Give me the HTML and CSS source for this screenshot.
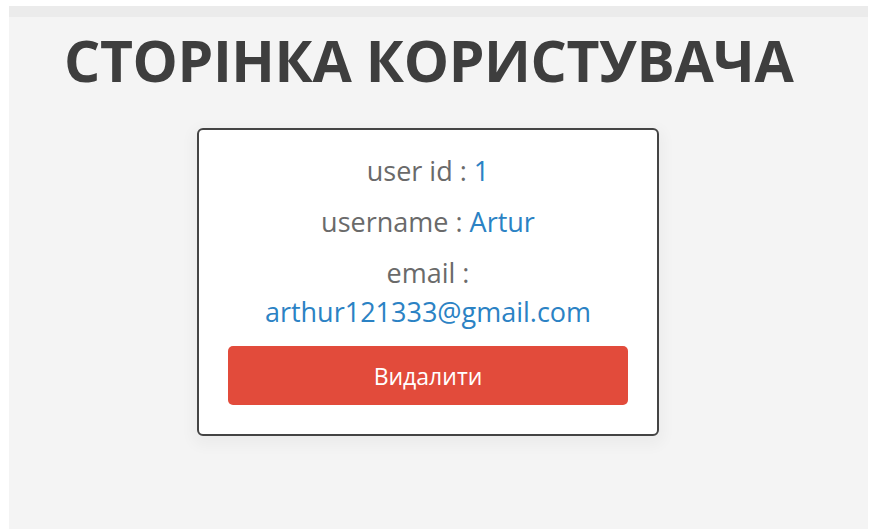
FILE: index.html
```html
<!DOCTYPE html>
<html lang="uk">
<head>
<meta charset="utf-8">
<title>Сторінка користувача</title>
<link rel="stylesheet" href="styles.css">
</head>
<body>
<div class="page">
  <div class="topbar"></div>
  <main class="content">
    <h1 class="title">СТОРІНКА КОРИСТУВАЧА</h1>
    <section class="card">
      <p class="field"><span class="label">user id :</span> <span class="value">1</span></p>
      <p class="field"><span class="label">username :</span> <span class="value">Artur</span></p>
      <p class="field"><span class="label">email :</span> <span class="value">arthur121333@gmail.com</span></p>
      <button class="btn-delete" type="button">Видалити</button>
    </section>
  </main>
</div>
</body>
</html>
```
FILE: styles.css
```css
html, body {
  margin: 0;
  padding: 0;
  background: #ffffff;
  height: 100%;
}

body {
  font-family: "Open Sans", "Noto Sans", sans-serif;
  padding: 6px 2px 0 9px;
  box-sizing: border-box;
}

.page {
  background: #f4f4f4;
  min-height: 100%;
}

.topbar {
  height: 11px;
  background: #ebebeb;
}

.content {
  padding: 0 0 0 55px;
}

.title {
  margin: 0;
  padding-top: 5px;
  font-size: 57px;
  line-height: 76px;
  font-weight: 700;
  color: #3e3e3e;
  letter-spacing: -0.4px;
}

.card {
  box-sizing: border-box;
  width: 462px;
  margin: 30px 0 0 133px;
  padding: 21px 29px 29px;
  background: #ffffff;
  border: 2px solid #444444;
  border-radius: 6px;
  box-shadow: 0 5px 14px 5px rgba(0, 0, 0, 0.035);
  text-align: center;
}

.field {
  margin: 0 0 12px;
  font-size: 27px;
  line-height: 39px;
}

.label {
  color: #6a6a6a;
}

.value {
  color: #2b82c4;
}

.btn-delete {
  display: block;
  width: 100%;
  height: 59px;
  margin-top: 15px;
  border: none;
  border-radius: 5px;
  background: #e24b3b;
  color: #ffffff;
  font-family: inherit;
  font-size: 23px;
  cursor: pointer;
}
```
